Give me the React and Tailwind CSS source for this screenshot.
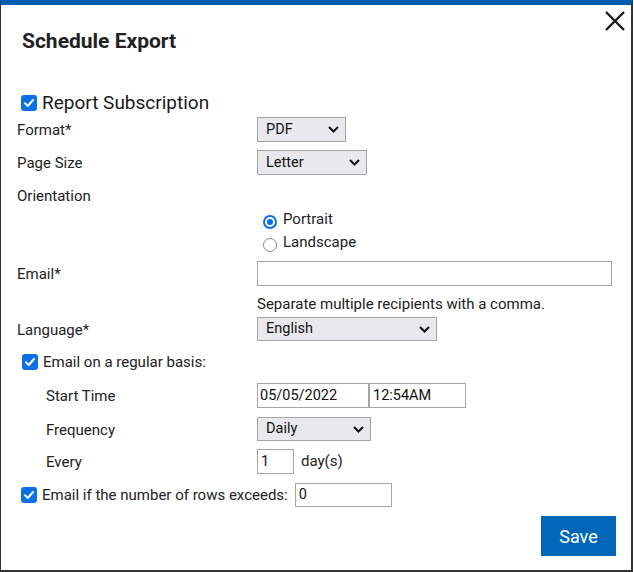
import React from "react";

function Check() {
  return (
    <span className="flex h-[16px] w-[16px] shrink-0 items-center justify-center rounded-[3px] bg-[#0b6fe6]">
      <svg width="12" height="12" viewBox="0 0 12 12" fill="none">
        <path d="M2 6.3 L4.8 9 L10 3" stroke="white" strokeWidth="2" strokeLinecap="round" strokeLinejoin="round" />
      </svg>
    </span>
  );
}

function Chevron() {
  return (
    <svg width="11" height="7" viewBox="0 0 11 7" fill="none" className="shrink-0">
      <path d="M1 1 L5.5 5.5 L10 1" stroke="#111" strokeWidth="2" />
    </svg>
  );
}

function Select({ value, w, h = "h-[25px]" }) {
  return (
    <div className={`flex ${h} ${w} items-center justify-between border border-[#a5a5a5] bg-[#e9e9ed] pl-[8px] pr-[6px] text-[14.5px] text-[#111]`}>
      <span>{value}</span>
      <Chevron />
    </div>
  );
}

function Input({ value = "", w, h = "h-[25px]", pl = "pl-[2px]" }) {
  return (
    <div className={`flex ${h} ${w} items-center border border-[#a5a5a5] bg-white ${pl} text-[14.5px] text-[#111]`}>
      {value}
    </div>
  );
}

function Label({ children, indent }) {
  return (
    <div className={`w-[240px] shrink-0 pt-[2px] ${indent ? "pl-[29px]" : ""}`}>{children}</div>
  );
}

export default function App() {
  return (
    <div
      className="box-border flex h-[572px] w-[633px] flex-col border-t-[5px] border-r-2 border-b-2 border-l border-t-[#005fb0] border-r-[#333] border-b-[#333] border-l-[#333] bg-white text-[15px] text-[#222]"
      style={{ fontFamily: "Roboto, 'Liberation Sans', sans-serif" }}
    >
      <div className="flex items-start justify-between pt-[6px] pr-[6px]">
        <div className="pt-[18px] pl-[21px] text-[21px] font-bold leading-[25px] text-[#222]">Schedule Export</div>
        <svg width="20" height="20" viewBox="0 0 20 20" fill="none">
          <path d="M1 1 L19 19 M19 1 L1 19" stroke="#1a1a1a" strokeWidth="2.4" />
        </svg>
      </div>

      <div className="flex flex-col pl-[16px]">
        <div className="mt-[39px] flex h-[20px] items-center gap-[5px] pl-[4px]">
          <Check />
          <span className="text-[19px] text-[#1a1a1a]">Report Subscription</span>
        </div>

        <div className="mt-[4px] flex h-[25px] items-center">
          <Label>Format*</Label>
          <Select value="PDF" w="w-[89px]" />
        </div>

        <div className="mt-[8px] flex h-[25px] items-center">
          <Label>Page Size</Label>
          <Select value="Letter" w="w-[110px]" />
        </div>

        <div className="mt-[8px] flex h-[25px] items-center">
          <Label>Orientation</Label>
        </div>

        <div className="mt-[1px] flex h-[20px] items-center pl-[246px]">
          <span className="mt-[5px] flex h-[14px] w-[14px] items-center justify-center rounded-full border-[2px] border-[#0b6fe6]">
            <span className="h-[6px] w-[6px] rounded-full bg-[#0b6fe6]" />
          </span>
          <span className="ml-[6px]">Portrait</span>
        </div>
        <div className="mt-[3px] flex h-[20px] items-center pl-[246px]">
          <span className="mt-[5px] h-[14px] w-[14px] rounded-full border-[1.5px] border-[#8a8a8a]" />
          <span className="ml-[6px]">Landscape</span>
        </div>

        <div className="mt-[9px] flex h-[25px] items-center">
          <Label>Email*</Label>
          <Input w="w-[355px]" />
        </div>

        <div className="mt-[9px] flex h-[18px] items-center pl-[240px]">
          Separate multiple recipients with a comma.
        </div>

        <div className="mt-[4px] flex h-[24px] items-center">
          <Label>Language*</Label>
          <Select value="English" w="w-[180px]" h="h-[24px]" />
        </div>

        <div className="mt-[11px] flex h-[20px] items-center gap-[5px] pl-[5px]">
          <Check />
          <span>Email on a regular basis:</span>
        </div>

        <div className="mt-[11px] flex h-[25px] items-center">
          <Label indent>Start Time</Label>
          <Input value="05/05/2022" w="w-[112px]" />
          <Input value="12:54AM" w="w-[97px]" pl="pl-[3px]" />
        </div>

        <div className="mt-[9px] flex h-[24px] items-center">
          <Label indent>Frequency</Label>
          <Select value="Daily" w="w-[114px]" h="h-[24px]" />
        </div>

        <div className="mt-[8px] flex h-[25px] items-center">
          <Label indent>Every</Label>
          <Input value="1" w="w-[37px]" pl="pl-[3px]" />
          <span className="ml-[7px]">day(s)</span>
        </div>

        <div className="mt-[9px] flex h-[24px] items-center pl-[4px]">
          <Check />
          <span className="ml-[5px]">Email if the number of rows exceeds:</span>
          <div className="ml-[7px]">
            <Input value="0" w="w-[97px]" h="h-[24px]" pl="pl-[3px]" />
          </div>
        </div>
      </div>

      <div className="mt-[9px] flex justify-end pr-[15px]">
        <div className="flex h-[40px] w-[75px] items-center justify-center bg-[#0067b8] text-[18px] text-white">
          Save
        </div>
      </div>
    </div>
  );
}
